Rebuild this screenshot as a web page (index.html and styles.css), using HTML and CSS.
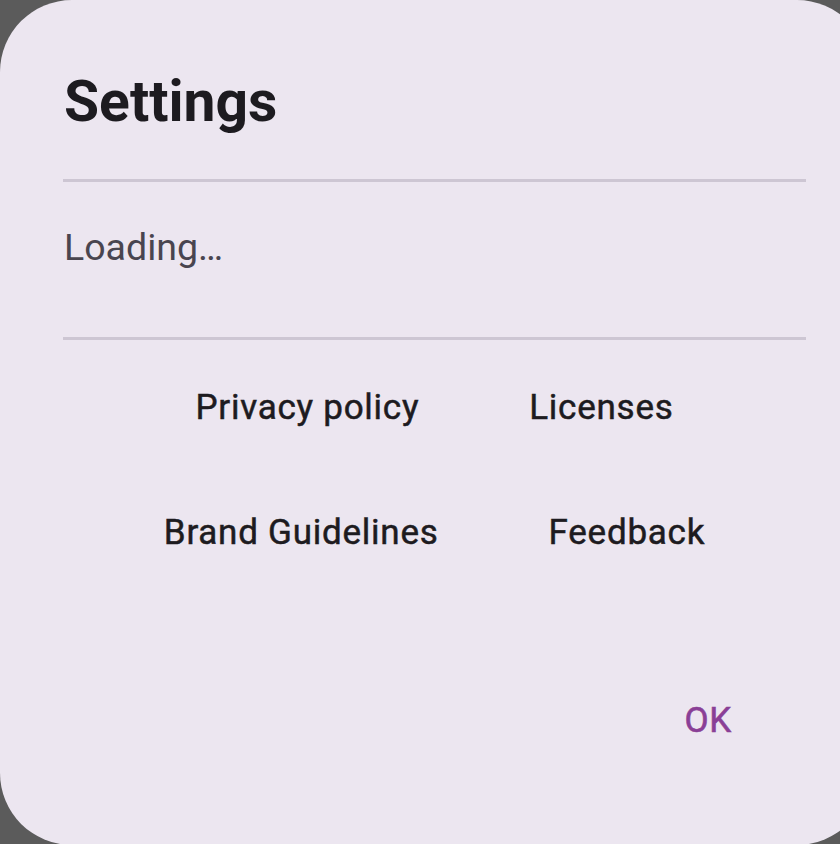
FILE: index.html
```html
<!DOCTYPE html>
<html lang="en">
<head>
<meta charset="utf-8">
<title>Settings</title>
<link rel="stylesheet" href="styles.css">
</head>
<body>
<div class="dialog">
  <h1 class="title">Settings</h1>
  <hr class="divider">
  <div class="loading">Loading…</div>
  <hr class="divider divider-bottom">
  <div class="links">
    <button class="text-btn">Privacy policy</button>
    <button class="text-btn">Licenses</button>
    <button class="text-btn">Brand Guidelines</button>
    <button class="text-btn">Feedback</button>
  </div>
  <div class="actions">
    <button class="text-btn ok">OK</button>
  </div>
</div>
</body>
</html>
```
FILE: styles.css
```css
html, body {
  margin: 0;
  padding: 0;
  background: #5b5b5b;
  overflow: hidden;
  height: 844px;
}
.dialog {
  box-sizing: border-box;
  width: 869px;
  height: 845px;
  background: #ece6f0;
  border-radius: 72px;
  padding: 68px 63px 0 64px;
  font-family: Roboto, "Noto Sans", sans-serif;
}
.title {
  margin: 0;
  font-size: 57px;
  line-height: 68px;
  font-weight: 700;
  color: #1d1b20;
}
.divider {
  margin: 43px 0 0 -1px;
  border: 0;
  height: 3px;
  background: #cdc6d3;
}
.loading {
  margin-top: 42px;
  font-size: 37.5px;
  line-height: 46px;
  color: #49454f;
}
.divider-bottom {
  margin-top: 67px;
}
.links {
  margin-top: 15px;
  margin-left: -1px;
  display: flex;
  flex-wrap: wrap;
  justify-content: center;
  column-gap: 48px;
  row-gap: 20px;
  padding: 0 60px;
}
.text-btn {
  background: none;
  border: 0;
  padding: 0 31px;
  height: 105px;
  line-height: 105px;
  font-family: Roboto, "Noto Sans", sans-serif;
  font-size: 35px;
  font-weight: 400;
  letter-spacing: 0.75px;
  color: #1d1b20;
  -webkit-text-stroke: 0.5px #1d1b20;
}
.actions {
  margin-top: 83px;
  display: flex;
  justify-content: flex-end;
  padding-right: 43px;
}
.ok {
  color: #8a3f96;
  -webkit-text-stroke: 0.6px #8a3f96;
}
```
